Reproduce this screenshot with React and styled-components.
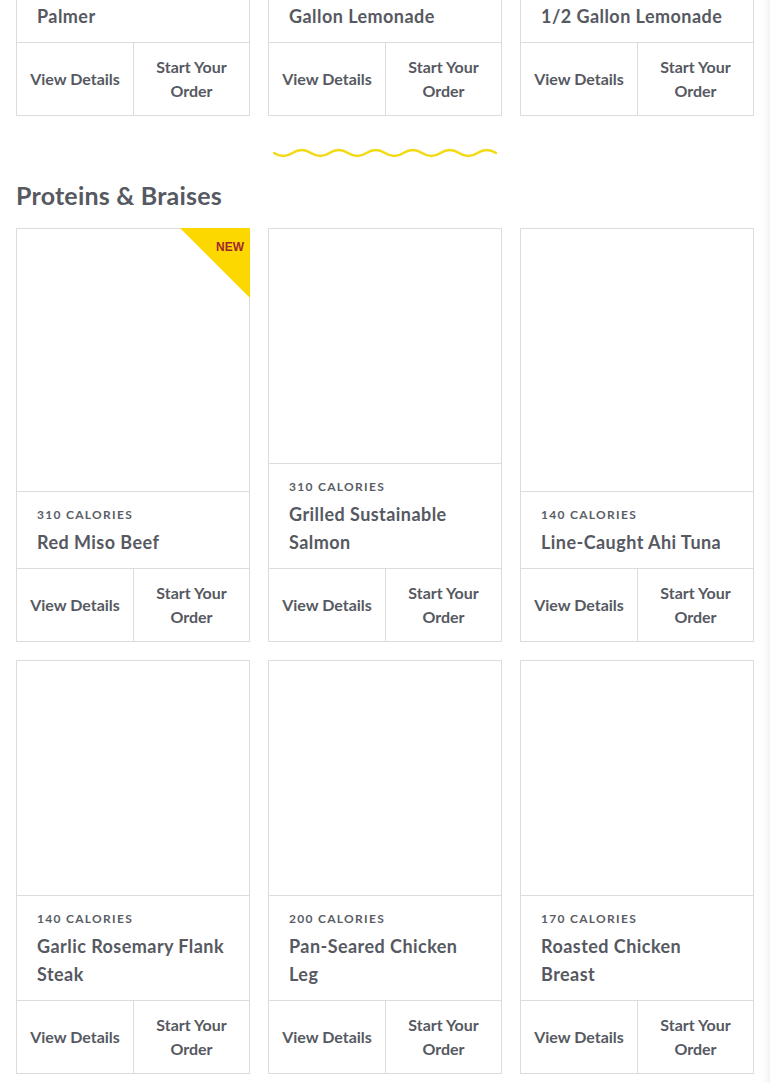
import React from 'react';
import styled, { createGlobalStyle } from 'styled-components';

const GlobalStyle = createGlobalStyle`
    html, body {
        margin: 0;
        padding: 0;
        background: #ffffff;
        overflow: hidden;
    }
    body {
        font-family: Lato, "Open Sans", sans-serif;
        color: #565961;
    }
`;

const Page = styled.div`
    width: 770px;
    min-height: 1083px;
    box-shadow: inset -8px 0 6px -5px rgba(0, 0, 0, 0.06);
    overflow: hidden;
`;

const Content = styled.div`
    padding: 0 16px;
    margin-top: ${props => props.offset || 0}px;
`;

const Grid = styled.div`
    display: grid;
    grid-template-columns: repeat(3, 234px);
    column-gap: 18px;
    row-gap: 18px;
`;

const Card = styled.div`
    position: relative;
    display: flex;
    flex-direction: column;
    height: 414px;
    border: 1px solid #dcdcdc;
    box-sizing: border-box;
    background: #fff;
`;

const Photo = styled.div`
    flex: 1;
    border-bottom: 1px solid #dcdcdc;
`;

const Info = styled.div`
    padding: 14px 20px 12px;
`;

const Calories = styled.div`
    font-size: 12px;
    line-height: 18px;
    font-weight: 700;
    letter-spacing: 1.3px;
    color: #5a5d65;
    margin-bottom: 4px;
`;

const Name = styled.div`
    font-size: 18px;
    line-height: 28px;
    font-weight: 700;
    letter-spacing: 0.45px;
    color: #565961;
`;

const Actions = styled.div`
    display: grid;
    grid-template-columns: 1fr 1fr;
    height: 72px;
    border-top: 1px solid #dcdcdc;
`;

const Action = styled.div`
    display: flex;
    align-items: center;
    justify-content: center;
    text-align: center;
    font-size: 16px;
    line-height: 24px;
    font-weight: 700;
    color: #565961;
    & + & {
        border-left: 1px solid #dcdcdc;
    }
`;

const Badge = styled.div`
    position: absolute;
    top: -1px;
    right: -1px;
    width: 70px;
    height: 70px;
    background: #fcd800;
    clip-path: polygon(0 0, 100% 0, 100% 100%);
`;

const BadgeText = styled.span`
    position: absolute;
    top: 12px;
    right: 6px;
    font-family: "Liberation Sans", Arial, sans-serif;
    font-size: 12px;
    font-weight: 700;
    color: #a3262a;
`;

const Divider = styled.div`
    padding-top: 32px;
    display: flex;
    justify-content: center;
`;

const Heading = styled.h2`
    margin: 22px 0 18px;
    font-size: 25px;
    line-height: 30px;
    font-weight: 700;
    letter-spacing: 0.2px;
    color: #565961;
`;

const Wave = () => {
    const half = 222 / 12;
    let d = `M1 5 q ${half / 2} 6 ${half} 0`;
    for (let i = 1; i < 12; i++) d += ` t ${half} 0`;
    return (
        <svg width="224" height="10" viewBox="0 0 224 10">
            <path d={d} fill="none" stroke="#f4da14" strokeWidth="2.6" strokeLinecap="round" />
        </svg>
    );
};

const MenuCard = ({ calories, name, isNew }) => (
    <Card>
        <Photo />
        <Info>
            <Calories>{calories} CALORIES</Calories>
            <Name>{name}</Name>
        </Info>
        <Actions>
            <Action>View Details</Action>
            <Action>Start Your<br />Order</Action>
        </Actions>
        {isNew && (
            <Badge>
                <BadgeText>NEW</BadgeText>
            </Badge>
        )}
    </Card>
);

const drinks = [
    { calories: 230, name: <>Half Gallon Arnold<br />Palmer</> },
    { calories: 180, name: <>Sparkling Half<br />Gallon Lemonade</> },
    { calories: 210, name: <>Blueberry Mint<br />1/2 Gallon Lemonade</> },
];

const proteins = [
    { calories: 310, name: 'Red Miso Beef', isNew: true },
    { calories: 310, name: 'Grilled Sustainable Salmon' },
    { calories: 140, name: 'Line-Caught Ahi Tuna' },
    { calories: 140, name: 'Garlic Rosemary Flank Steak' },
    { calories: 200, name: 'Pan-Seared Chicken Leg' },
    { calories: 170, name: 'Roasted Chicken Breast' },
];

const App = () => {
    return (
        <Page>
            <GlobalStyle />
            <Content offset={-298}>
                <Grid>
                    {drinks.map((item, i) => (
                        <MenuCard key={i} {...item} />
                    ))}
                </Grid>
                <Divider>
                    <Wave />
                </Divider>
                <Heading>Proteins &amp; Braises</Heading>
                <Grid>
                    {proteins.map((item, i) => (
                        <MenuCard key={i} {...item} />
                    ))}
                </Grid>
            </Content>
        </Page>
    );
};

export default App;
